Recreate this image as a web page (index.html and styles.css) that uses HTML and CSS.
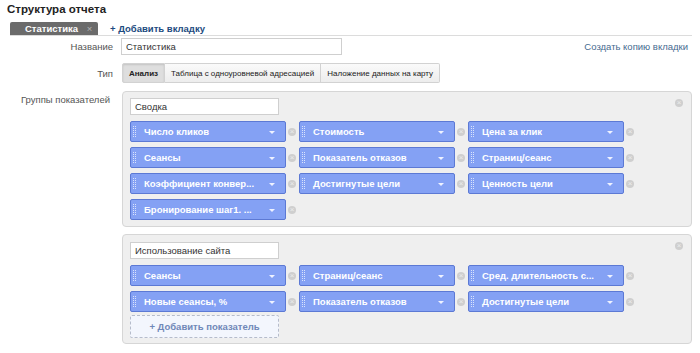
FILE: index.html
```html
<!DOCTYPE html>
<html lang="ru">
<head>
  <meta charset="UTF-8">
  <meta name="viewport" content="width=device-width, initial-scale=1.0">
  <link rel="stylesheet" href="styles.css">
  <title>Структура отчета</title>
</head>
<body>
  <div class="page">
    <h1 class="title">Структура отчета</h1>

    <div class="tabs">
      <div class="tab">Статистика <span class="tab-close">×</span></div>
      <a class="add-tab" href="#">+ Добавить вкладку</a>
    </div>

    <div class="row row-name">
      <div class="label">Название</div>
      <div class="field">
        <input class="text-input name-input" type="text" value="Статистика">
        <a class="copy-link" href="#">Создать копию вкладки</a>
      </div>
    </div>

    <div class="row row-type">
      <div class="label">Тип</div>
      <div class="field">
        <div class="btn-group">
          <button class="btn active">Анализ</button>
          <button class="btn">Таблица с одноуровневой адресацией</button>
          <button class="btn">Наложение данных на карту</button>
        </div>
      </div>
    </div>

    <div class="row row-groups">
      <div class="label">Группы показателей</div>
      <div class="field groups">

        <div class="group">
          <span class="group-close"></span>
          <input class="text-input group-name" type="text" value="Сводка">
          <div class="metrics">
            <div class="metric"><div class="chip"><span class="grip"></span>Число кликов<span class="caret"></span></div><span class="remove"></span></div>
            <div class="metric"><div class="chip"><span class="grip"></span>Стоимость<span class="caret"></span></div><span class="remove"></span></div>
            <div class="metric"><div class="chip"><span class="grip"></span>Цена за клик<span class="caret"></span></div><span class="remove"></span></div>
            <div class="metric"><div class="chip"><span class="grip"></span>Сеансы<span class="caret"></span></div><span class="remove"></span></div>
            <div class="metric"><div class="chip"><span class="grip"></span>Показатель отказов<span class="caret"></span></div><span class="remove"></span></div>
            <div class="metric"><div class="chip"><span class="grip"></span>Страниц/сеанс<span class="caret"></span></div><span class="remove"></span></div>
            <div class="metric"><div class="chip"><span class="grip"></span>Коэффициент конвер...<span class="caret"></span></div><span class="remove"></span></div>
            <div class="metric"><div class="chip"><span class="grip"></span>Достигнутые цели<span class="caret"></span></div><span class="remove"></span></div>
            <div class="metric"><div class="chip"><span class="grip"></span>Ценность цели<span class="caret"></span></div><span class="remove"></span></div>
            <div class="metric"><div class="chip"><span class="grip"></span>Бронирование шаг1. ...<span class="caret"></span></div><span class="remove"></span></div>
          </div>
        </div>

        <div class="group">
          <span class="group-close"></span>
          <input class="text-input group-name" type="text" value="Использование сайта">
          <div class="metrics">
            <div class="metric"><div class="chip"><span class="grip"></span>Сеансы<span class="caret"></span></div><span class="remove"></span></div>
            <div class="metric"><div class="chip"><span class="grip"></span>Страниц/сеанс<span class="caret"></span></div><span class="remove"></span></div>
            <div class="metric"><div class="chip"><span class="grip"></span>Сред. длительность с...<span class="caret"></span></div><span class="remove"></span></div>
            <div class="metric"><div class="chip"><span class="grip"></span>Новые сеансы, %<span class="caret"></span></div><span class="remove"></span></div>
            <div class="metric"><div class="chip"><span class="grip"></span>Показатель отказов<span class="caret"></span></div><span class="remove"></span></div>
            <div class="metric"><div class="chip"><span class="grip"></span>Достигнутые цели<span class="caret"></span></div><span class="remove"></span></div>
          </div>
          <a class="add-metric" href="#">+ Добавить показатель</a>
        </div>

      </div>
    </div>
  </div>
</body>
</html>
```

FILE: styles.css
```css
* {
  margin: 0;
  padding: 0;
  box-sizing: border-box;
}

body {
  background-color: #fff;
  font-family: "Liberation Sans", Arial, sans-serif;
  font-size: 9.5px;
  color: #333;
}

a {
  text-decoration: none;
}

.page {
  padding: 2px 8px 0 8px;
}

.title {
  font-size: 11.5px;
  font-weight: bold;
  color: #222;
  line-height: 14px;
  margin-left: -1px;
}

/* tabs */
.tabs {
  display: flex;
  align-items: flex-end;
  gap: 12px;
  margin-top: 6px;
  margin-left: 2px;
  border-bottom: 1px solid #dcdcdc;
}

.tab {
  background-color: #6b6b6b;
  color: #fff;
  font-weight: bold;
  height: 13px;
  line-height: 13px;
  width: 88px;
  padding-left: 15px;
  border-radius: 2px 2px 0 0;
}

.tab-close {
  color: #b5b5b5;
  font-weight: normal;
  margin-left: 6px;
}

.add-tab {
  color: #1d4b80;
  font-weight: bold;
  line-height: 13px;
}

/* form rows */
.row {
  display: flex;
  gap: 8px;
}

.label {
  width: 105px;
  flex: none;
  text-align: right;
  color: #555;
}

.field {
  flex: 1;
}

.row-name {
  margin-top: 2px;
  align-items: center;
}

.row-name .field {
  display: flex;
  justify-content: space-between;
  align-items: center;
}

.text-input {
  font-family: inherit;
  font-size: 9.5px;
  color: #333;
  border: 1px solid #cfcfcf;
  background: #fff;
  height: 17px;
  padding: 0 4px;
  outline: none;
}

.name-input {
  width: 221px;
}

.copy-link {
  color: #466a8f;
  margin-right: 4px;
}

.row-type {
  margin-top: 8px;
  align-items: center;
}

.btn-group {
  display: flex;
  margin-left: 1px;
}

.btn {
  font-family: inherit;
  font-size: 8px;
  color: #222;
  height: 20px;
  padding: 0 6px;
  background: linear-gradient(#fafafa, #ededed);
  border: 1px solid #d2d2d2;
  border-left: none;
}

.btn:first-child {
  border-left: 1px solid #d2d2d2;
  border-radius: 2px 0 0 2px;
}

.btn:last-child {
  border-radius: 0 2px 2px 0;
}

.btn.active {
  font-weight: bold;
  padding: 0 6px;
  background: #dedede;
  box-shadow: inset 0 1px 2px rgba(0, 0, 0, 0.12);
}

.row-groups {
  margin-top: 8px;
}

.row-groups .label {
  margin-left: -3px;
  margin-right: 3px;
  padding-top: 3px;
}

/* metric groups */
.groups {
  display: flex;
  flex-direction: column;
  gap: 7px;
  margin-left: 1px;
}

.group {
  position: relative;
  background-color: #efefef;
  border: 1px solid #d6d6d6;
  border-radius: 4px;
  padding: 6px 7px 6px 7px;
}

.group + .group {
  padding-top: 7px;
  padding-bottom: 5px;
}

.group-name {
  width: 149px;
  display: block;
  margin-bottom: 6px;
}

.group-close {
  position: absolute;
  top: 7px;
  right: 8px;
  width: 8px;
  height: 8px;
  border-radius: 50%;
  background: #cfcfcf;
}

.group-close::after,
.remove::after {
  content: "×";
  position: absolute;
  left: 0;
  right: 0;
  top: -1px;
  text-align: center;
  font-size: 8px;
  line-height: 9px;
  color: #ececec;
}

.metrics {
  display: flex;
  flex-wrap: wrap;
  row-gap: 5px;
}

.metric {
  display: flex;
  align-items: center;
  width: 169px;
}

.chip {
  position: relative;
  display: flex;
  align-items: center;
  width: 156px;
  height: 21px;
  padding-left: 13px;
  background-color: #84a1f4;
  border: 1px solid #5c79d4;
  border-radius: 2px;
  color: #fff;
  font-weight: bold;
  white-space: nowrap;
}

.grip {
  position: absolute;
  left: 2px;
  top: 4px;
  width: 3px;
  height: 11px;
  border-left: 1px dotted rgba(255, 255, 255, 0.7);
  border-right: 1px dotted rgba(255, 255, 255, 0.7);
}

.caret {
  position: absolute;
  right: 10px;
  top: 9px;
  border-left: 3px solid transparent;
  border-right: 3px solid transparent;
  border-top: 3px solid #eef2ff;
}

.remove {
  position: relative;
  width: 8px;
  height: 8px;
  margin-left: 2px;
  border-radius: 50%;
  background: #cfcfcf;
}

.add-metric {
  display: block;
  width: 149px;
  height: 23px;
  line-height: 21px;
  margin-top: 3px;
  text-align: center;
  color: #7088b8;
  font-weight: bold;
  background-color: #f3f6fd;
  border: 1px dashed #b6bccb;
  border-radius: 2px;
}
```
